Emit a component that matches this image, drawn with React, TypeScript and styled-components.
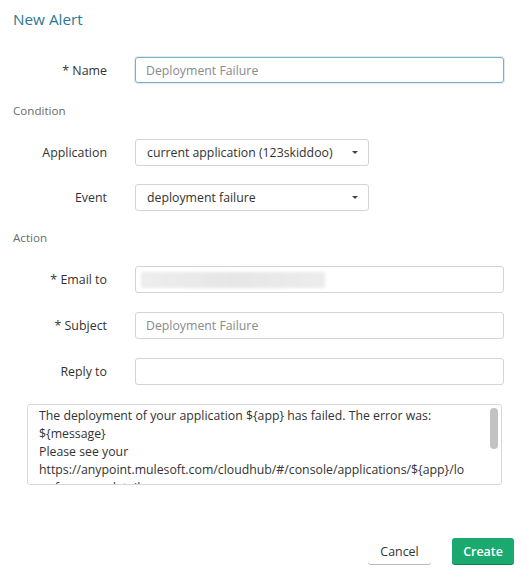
import React from 'react';
import styled, { createGlobalStyle } from 'styled-components';

const GlobalStyle = createGlobalStyle`
  html, body {
    margin: 0;
    padding: 0;
    background: #ffffff;
  }
  body {
    font-family: 'Open Sans', 'Liberation Sans', sans-serif;
    color: #333333;
  }
`;

const Page = styled.div`
  width: 529px;
  height: 577px;
  box-sizing: border-box;
  padding: 9px 25px 0 13px;
  display: flex;
  flex-direction: column;
`;

const Title = styled.h1`
  margin: 0;
  font-size: 15.3px;
  font-weight: 400;
  line-height: 20px;
  color: #2a7893;
`;

const Section = styled.div`
  font-size: 11.6px;
  line-height: 16px;
  color: #6b6b6b;
  margin-top: ${(p: { top: number }) => p.top}px;
`;

const Row = styled.div`
  display: grid;
  grid-template-columns: 94px 1fr;
  column-gap: 28px;
  align-items: center;
  margin-top: ${(p: { top: number }) => p.top}px;
`;

const Label = styled.label`
  text-align: right;
  font-size: 12.4px;
  color: #333333;
`;

const Input = styled.div<{ focused?: boolean }>`
  box-sizing: border-box;
  height: ${(p) => (p.focused ? 26 : 27)}px;
  border: 1px solid ${(p) => (p.focused ? '#7eaec2' : '#d4d4d4')};
  box-shadow: ${(p) => (p.focused ? '0 0 0 1px rgba(126, 174, 194, 0.25)' : 'none')};
  border-radius: 3px;
  padding: 0 10px;
  display: flex;
  align-items: center;
  font-size: 12.3px;
  color: #8a8a8a;
`;

const Blur = styled.div`
  width: 184px;
  height: 16px;
  margin-left: -5px;
  background: linear-gradient(90deg, #ededed, #e6e6e6 50%, #ececec);
  filter: blur(1.5px);
`;

const Select = styled.div`
  box-sizing: border-box;
  width: 234px;
  height: 27px;
  border: 1px solid #d4d4d4;
  border-radius: 3px;
  padding: 0 10px 0 11px;
  display: flex;
  align-items: center;
  justify-content: space-between;
  font-size: 12.3px;
  color: #333333;
`;

const Caret = styled.span`
  width: 0;
  height: 0;
  border-left: 3px solid transparent;
  border-right: 3px solid transparent;
  border-top: 3px solid #444444;
`;

const MessageBox = styled.div`
  position: relative;
  box-sizing: border-box;
  margin: 19px 2px 0 14px;
  height: 81px;
  border: 1px solid #d8d8d8;
  border-radius: 3px;
  padding: 2px 35px 0 11px;
  overflow: hidden;
  font-size: 12.3px;
  line-height: 18px;
  color: #333333;
  white-space: pre-wrap;
  word-break: break-all;
`;

const Thumb = styled.div`
  position: absolute;
  top: 3px;
  right: 3px;
  width: 8px;
  height: 41px;
  border-radius: 4px;
  background: #c2c2c2;
`;

const Footer = styled.div`
  margin-top: 53px;
  display: flex;
  justify-content: flex-end;
  gap: 21px;
  margin-right: -10px;
`;

const Button = styled.button<{ primary?: boolean }>`
  box-sizing: border-box;
  height: 26px;
  width: ${(p) => (p.primary ? 62 : 63)}px;
  padding: 0;
  border: none;
  border-radius: 3px;
  font-family: inherit;
  font-size: 12.4px;
  font-weight: ${(p) => (p.primary ? 600 : 400)};
  color: ${(p) => (p.primary ? '#ffffff' : '#333333')};
  background: ${(p) => (p.primary ? '#1aaa70' : '#ffffff')};
  box-shadow: ${(p) => (p.primary ? '0 1px 0 #12804f' : '0 1px 0 #b9b9b9')};
`;

const message =
  'The deployment of your application ${app} has failed. The error was:\n${message}\nPlease see your\nhttps://anypoint.mulesoft.com/cloudhub/#/console/applications/${app}/logs for more details.';

export default function App() {
  return (
    <>
      <GlobalStyle />
      <Page>
        <Title>New Alert</Title>
        <Row top={28}>
          <Label>* Name</Label>
          <Input focused>Deployment Failure</Input>
        </Row>
        <Section top={20}>Condition</Section>
        <Row top={20}>
          <Label>Application</Label>
          <Select>
            current application (123skiddoo)
            <Caret />
          </Select>
        </Row>
        <Row top={18}>
          <Label>Event</Label>
          <Select>
            deployment failure
            <Caret />
          </Select>
        </Row>
        <Section top={19}>Action</Section>
        <Row top={20}>
          <Label>* Email to</Label>
          <Input>
            <Blur />
          </Input>
        </Row>
        <Row top={19}>
          <Label>* Subject</Label>
          <Input>Deployment Failure</Input>
        </Row>
        <Row top={19}>
          <Label>Reply to</Label>
          <Input />
        </Row>
        <MessageBox>
          {message}
          <Thumb />
        </MessageBox>
        <Footer>
          <Button>Cancel</Button>
          <Button primary>Create</Button>
        </Footer>
      </Page>
    </>
  );
}
